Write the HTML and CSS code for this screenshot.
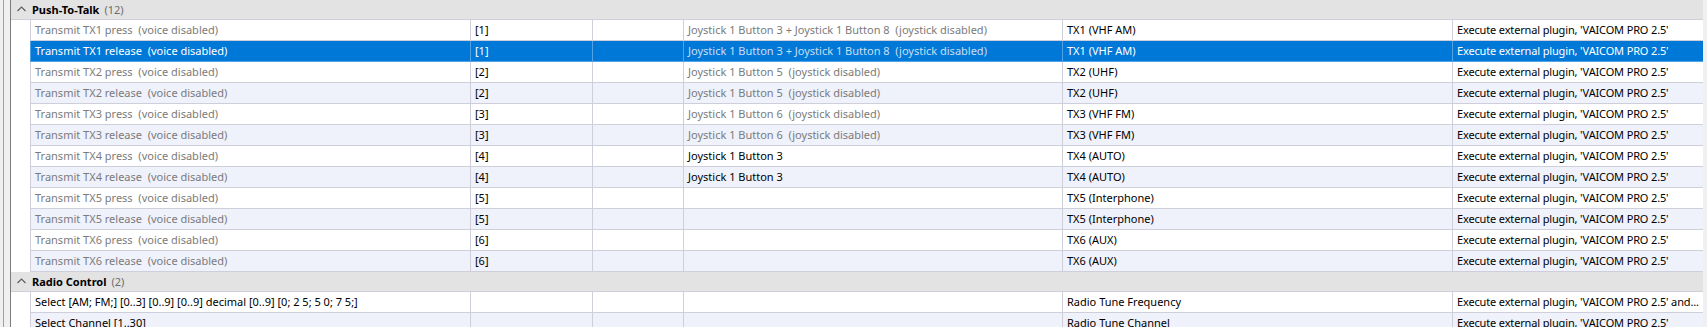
FILE: index.html
```html
<!DOCTYPE html>
<html lang="en">
<head>
    <meta charset="UTF-8">
    <title>Bindings</title>
    <link rel="stylesheet" href="styles.css">
</head>
<body>
    <div class="ventana">
        <div class="margen"></div>

        <div class="lista">
            <!-- Grupo: Push-To-Talk -->
            <div class="grupo">
                <svg class="flecha" width="9" height="6" viewBox="0 0 9 6"><path d="M0.5 5 L4.5 1 L8.5 5" fill="none" stroke="#5f5f5f" stroke-width="1.2"/></svg>
                <span class="grupo-nombre">Push-To-Talk</span>
                <span class="grupo-cuenta">(12)</span>
            </div>

            <div class="fila">
                <div class="celda c1 gris">Transmit TX1 press  (voice disabled)</div>
                <div class="celda c2">[1]</div>
                <div class="celda c3"></div>
                <div class="celda c4 gris">Joystick 1 Button 3 + Joystick 1 Button 8  (joystick disabled)</div>
                <div class="celda c5">TX1 (VHF AM)</div>
                <div class="celda c6">Execute external plugin, 'VAICOM PRO 2.5'</div>
            </div>
            <div class="fila seleccionada">
                <div class="celda c1 gris">Transmit TX1 release  (voice disabled)</div>
                <div class="celda c2">[1]</div>
                <div class="celda c3"></div>
                <div class="celda c4 gris">Joystick 1 Button 3 + Joystick 1 Button 8  (joystick disabled)</div>
                <div class="celda c5">TX1 (VHF AM)</div>
                <div class="celda c6">Execute external plugin, 'VAICOM PRO 2.5'</div>
            </div>
            <div class="fila">
                <div class="celda c1 gris">Transmit TX2 press  (voice disabled)</div>
                <div class="celda c2">[2]</div>
                <div class="celda c3"></div>
                <div class="celda c4 gris">Joystick 1 Button 5  (joystick disabled)</div>
                <div class="celda c5">TX2 (UHF)</div>
                <div class="celda c6">Execute external plugin, 'VAICOM PRO 2.5'</div>
            </div>
            <div class="fila">
                <div class="celda c1 gris">Transmit TX2 release  (voice disabled)</div>
                <div class="celda c2">[2]</div>
                <div class="celda c3"></div>
                <div class="celda c4 gris">Joystick 1 Button 5  (joystick disabled)</div>
                <div class="celda c5">TX2 (UHF)</div>
                <div class="celda c6">Execute external plugin, 'VAICOM PRO 2.5'</div>
            </div>
            <div class="fila">
                <div class="celda c1 gris">Transmit TX3 press  (voice disabled)</div>
                <div class="celda c2">[3]</div>
                <div class="celda c3"></div>
                <div class="celda c4 gris">Joystick 1 Button 6  (joystick disabled)</div>
                <div class="celda c5">TX3 (VHF FM)</div>
                <div class="celda c6">Execute external plugin, 'VAICOM PRO 2.5'</div>
            </div>
            <div class="fila">
                <div class="celda c1 gris">Transmit TX3 release  (voice disabled)</div>
                <div class="celda c2">[3]</div>
                <div class="celda c3"></div>
                <div class="celda c4 gris">Joystick 1 Button 6  (joystick disabled)</div>
                <div class="celda c5">TX3 (VHF FM)</div>
                <div class="celda c6">Execute external plugin, 'VAICOM PRO 2.5'</div>
            </div>
            <div class="fila">
                <div class="celda c1 gris">Transmit TX4 press  (voice disabled)</div>
                <div class="celda c2">[4]</div>
                <div class="celda c3"></div>
                <div class="celda c4">Joystick 1 Button 3</div>
                <div class="celda c5">TX4 (AUTO)</div>
                <div class="celda c6">Execute external plugin, 'VAICOM PRO 2.5'</div>
            </div>
            <div class="fila">
                <div class="celda c1 gris">Transmit TX4 release  (voice disabled)</div>
                <div class="celda c2">[4]</div>
                <div class="celda c3"></div>
                <div class="celda c4">Joystick 1 Button 3</div>
                <div class="celda c5">TX4 (AUTO)</div>
                <div class="celda c6">Execute external plugin, 'VAICOM PRO 2.5'</div>
            </div>
            <div class="fila">
                <div class="celda c1 gris">Transmit TX5 press  (voice disabled)</div>
                <div class="celda c2">[5]</div>
                <div class="celda c3"></div>
                <div class="celda c4"></div>
                <div class="celda c5">TX5 (Interphone)</div>
                <div class="celda c6">Execute external plugin, 'VAICOM PRO 2.5'</div>
            </div>
            <div class="fila">
                <div class="celda c1 gris">Transmit TX5 release  (voice disabled)</div>
                <div class="celda c2">[5]</div>
                <div class="celda c3"></div>
                <div class="celda c4"></div>
                <div class="celda c5">TX5 (Interphone)</div>
                <div class="celda c6">Execute external plugin, 'VAICOM PRO 2.5'</div>
            </div>
            <div class="fila">
                <div class="celda c1 gris">Transmit TX6 press  (voice disabled)</div>
                <div class="celda c2">[6]</div>
                <div class="celda c3"></div>
                <div class="celda c4"></div>
                <div class="celda c5">TX6 (AUX)</div>
                <div class="celda c6">Execute external plugin, 'VAICOM PRO 2.5'</div>
            </div>
            <div class="fila">
                <div class="celda c1 gris">Transmit TX6 release  (voice disabled)</div>
                <div class="celda c2">[6]</div>
                <div class="celda c3"></div>
                <div class="celda c4"></div>
                <div class="celda c5">TX6 (AUX)</div>
                <div class="celda c6">Execute external plugin, 'VAICOM PRO 2.5'</div>
            </div>

            <!-- Grupo: Radio Control -->
            <div class="grupo">
                <svg class="flecha" width="9" height="6" viewBox="0 0 9 6"><path d="M0.5 5 L4.5 1 L8.5 5" fill="none" stroke="#5f5f5f" stroke-width="1.2"/></svg>
                <span class="grupo-nombre">Radio Control</span>
                <span class="grupo-cuenta">(2)</span>
            </div>

            <div class="fila">
                <div class="celda c1">Select [AM; FM;] [0..3] [0..9] [0..9] decimal [0..9] [0; 2 5; 5 0; 7 5;]</div>
                <div class="celda c2"></div>
                <div class="celda c3"></div>
                <div class="celda c4"></div>
                <div class="celda c5">Radio Tune Frequency</div>
                <div class="celda c6">Execute external plugin, 'VAICOM PRO 2.5' and...</div>
            </div>
            <div class="fila">
                <div class="celda c1">Select Channel [1..30]</div>
                <div class="celda c2"></div>
                <div class="celda c3"></div>
                <div class="celda c4"></div>
                <div class="celda c5">Radio Tune Channel</div>
                <div class="celda c6">Execute external plugin, 'VAICOM PRO 2.5'</div>
            </div>
        </div>

        <div class="borde-derecho"></div>
    </div>
</body>
</html>
```

FILE: styles.css
```css
html, body {
    margin: 0;
    padding: 0;
    height: 100%;
    overflow: hidden;
    background: #ffffff;
}

.ventana {
    display: flex;
    height: 327px;
    font-family: 'Noto Sans', 'Open Sans', sans-serif;
    font-size: 11px;
    color: #000;
}

/* Margen izquierdo con dos líneas */
.margen {
    width: 11px;
    flex: none;
    background: linear-gradient(to right,
        #f0f0f0 0, #f0f0f0 3px,
        #a0a0a0 3px, #a0a0a0 4px,
        #f0f0f0 4px, #f0f0f0 10px,
        #7c7c7c 10px, #7c7c7c 11px);
}

.lista {
    flex: 1;
    display: flex;
    flex-direction: column;
    overflow: hidden;
}

.borde-derecho {
    width: 4px;
    flex: none;
    background: #f0f0f0;
}

/* Cabecera de grupo */
.grupo {
    height: 20px;
    flex: none;
    box-sizing: border-box;
    background: #e3e3e3;
    border-bottom: 1px solid #cfcfdc;
    display: flex;
    align-items: center;
    padding-left: 6px;
}
.flecha {
    margin-right: 6px;
    margin-top: -1px;
}
.grupo-nombre {
    font-weight: bold;
    margin-right: 5px;
}
.grupo-cuenta {
    color: #6d6d6d;
}

/* Filas */
.fila {
    height: 21px;
    flex: none;
    display: flex;
    padding-left: 19px;
}
.fila:nth-child(even of .fila) .celda {
    background: #eff1fb;
}
.celda {
    box-sizing: border-box;
    height: 21px;
    flex: none;
    border-left: 1px solid #cfcfdc;
    border-bottom: 1px solid #cfcfdc;
    padding: 0 4px;
    line-height: 20px;
    white-space: pre;
    overflow: hidden;
    background: #fff;
}
.c1 { width: 440px; }
.c2 { width: 122px; }
.c3 { width: 91px; }
.c4 { width: 379px; }
.c5 { width: 390px; }
.c6 {
    flex: 1;
    letter-spacing: -0.15px;
}

.gris {
    color: #7b7b7b;
}

/* Fila seleccionada */
.lista .fila.seleccionada .celda {
    background: #0078d7;
    color: #fff;
    border-color: #52a2e6;
}
.lista .fila.seleccionada .c4.gris {
    color: #c9def3;
}
```
